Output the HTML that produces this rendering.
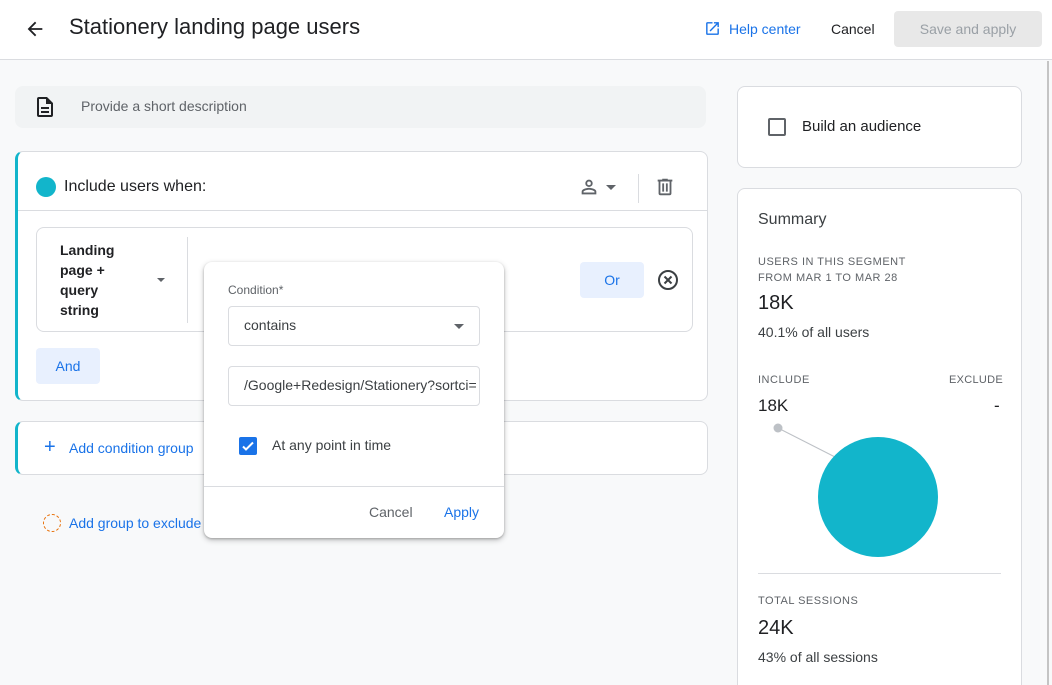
<!DOCTYPE html>
<html><head><meta charset="utf-8"><style>
*{box-sizing:border-box;margin:0;padding:0}
html,body{width:1052px;height:685px;overflow:hidden}
body{background:#f8f9fa;font-family:"Liberation Sans",Arial,sans-serif;color:#202124;position:relative}
.abs{position:absolute}
.card{position:absolute;background:#fff;border:1px solid #dadce0;border-radius:8px}
.blue{color:#1a73e8}
</style></head><body>
<div class="abs" style="left:0;top:0;width:1052px;height:60px;background:#fff;border-bottom:1px solid #dadce0"></div>
<svg class="abs" style="left:24px;top:18px" width="22" height="22" viewBox="0 0 24 24"><path d="M20 11H7.8l5.6-5.6L12 4l-8 8 8 8 1.4-1.4L7.8 13H20z" fill="#202124"/></svg>
<div class="abs" style="left:69px;top:14px;font-size:22px;color:#202124">Stationery landing page users</div>
<svg class="abs" style="left:704px;top:20px" width="17" height="17" viewBox="0 0 24 24"><path d="M19 19H5V5h7V3H5a2 2 0 0 0-2 2v14a2 2 0 0 0 2 2h14a2 2 0 0 0 2-2v-7h-2v7zM14 3v2h3.6l-9.8 9.8 1.4 1.4L19 6.4V10h2V3z" fill="#1a73e8"/></svg>
<div class="abs blue" style="left:729px;top:21px;font-size:14px">Help center</div>
<div class="abs" style="left:831px;top:21px;font-size:14px">Cancel</div>
<div class="abs" style="left:894px;top:11px;width:148px;height:36px;background:#e8e8e8;border-radius:4px;color:#9aa0a6;font-size:14px;text-align:center;line-height:36px">Save and apply</div>
<div class="abs" style="left:1047px;top:61px;width:2px;height:624px;background:#c4c4c4"></div>

<div class="abs" style="left:15px;top:86px;width:691px;height:42px;background:#f1f3f4;border-radius:8px"></div>
<svg class="abs" style="left:33px;top:95px" width="24" height="24" viewBox="0 0 24 24"><path d="M14 2H6a2 2 0 0 0-2 2v16a2 2 0 0 0 2 2h12a2 2 0 0 0 2-2V8zm4 18H6V4h7v5h5zM8 12h8v2H8zm0 4h8v2H8z" fill="#202124"/></svg>
<div class="abs" style="left:81px;top:98px;font-size:14px;color:#5f6368">Provide a short description</div>

<div class="card" style="left:15px;top:151px;width:693px;height:250px;border-left:3px solid #12b5cb"></div>
<div class="abs" style="left:36px;top:177px;width:20px;height:20px;border-radius:50%;background:#12b5cb"></div>
<div class="abs" style="left:64px;top:178px;font-size:16px">Include users when:</div>
<svg class="abs" style="left:578px;top:176px" width="22" height="22" viewBox="0 0 24 24"><path d="M12 6a2 2 0 1 1 0 4 2 2 0 0 1 0-4m0 9c2.7 0 5.8 1.3 6 2v1H6v-1c.2-.7 3.3-2 6-2m0-11a4 4 0 1 0 0 8 4 4 0 0 0 0-8zm0 9c-2.7 0-8 1.3-8 4v3h16v-3c0-2.7-5.3-4-8-4z" fill="#5f6368"/></svg>
<div class="abs" style="left:606px;top:185px;border-left:5px solid transparent;border-right:5px solid transparent;border-top:5px solid #5f6368"></div>
<div class="abs" style="left:638px;top:174px;width:1px;height:29px;background:#dadce0"></div>
<svg class="abs" style="left:654px;top:176px" width="22" height="22" viewBox="0 0 24 24"><path d="M15 4V3H9v1H4v2h1v13a2 2 0 0 0 2 2h10a2 2 0 0 0 2-2V6h1V4zm2 15H7V6h10zM9 8h2v9H9zm4 0h2v9h-2z" fill="#5f6368"/></svg>
<div class="abs" style="left:18px;top:210px;width:689px;height:1px;background:#dadce0"></div>
<div class="card" style="left:36px;top:227px;width:657px;height:105px"></div>
<div class="abs" style="left:60px;top:240px;font-size:14px;line-height:20px;font-weight:bold;color:#202124">Landing<br>page +<br>query<br>string</div>
<div class="abs" style="left:157px;top:278px;border-left:4px solid transparent;border-right:4px solid transparent;border-top:4px solid #5f6368"></div>
<div class="abs" style="left:187px;top:237px;width:1px;height:86px;background:#dadce0"></div>
<div class="abs" style="left:580px;top:262px;width:64px;height:36px;background:#e8f0fe;border-radius:4px;color:#1a73e8;font-size:14px;text-align:center;line-height:36px">Or</div>
<svg class="abs" style="left:656px;top:268px" width="24" height="24" viewBox="0 0 24 24"><circle cx="12" cy="12" r="9" fill="none" stroke="#3c4043" stroke-width="2"/><path d="M8.5 8.5l7 7M15.5 8.5l-7 7" stroke="#3c4043" stroke-width="2"/></svg>
<div class="abs" style="left:36px;top:348px;width:64px;height:36px;background:#e8f0fe;border-radius:4px;color:#1a73e8;font-size:14px;text-align:center;line-height:36px">And</div>

<div class="card" style="left:15px;top:421px;width:693px;height:54px;border-left:3px solid #12b5cb"></div>
<div class="abs blue" style="left:44px;top:436px;font-size:20px">+</div>
<div class="abs blue" style="left:69px;top:440px;font-size:14px">Add condition group</div>
<div class="abs" style="left:43px;top:514px;width:18px;height:18px;border-radius:50%;border:1.5px dashed #e8710a"></div>
<div class="abs blue" style="left:69px;top:515px;font-size:14px">Add group to exclude</div>

<div class="abs" style="left:204px;top:262px;width:300px;height:276px;background:#fff;border-radius:8px;box-shadow:0 2px 6px rgba(0,0,0,.25),0 1px 2px rgba(0,0,0,.2)"></div>
<div class="abs" style="left:228px;top:283px;font-size:12px;color:#5f6368">Condition*</div>
<div class="abs" style="left:228px;top:306px;width:252px;height:40px;border:1px solid #dadce0;border-radius:4px"></div>
<div class="abs" style="left:244px;top:317px;font-size:14px;color:#3c4043">contains</div>
<div class="abs" style="left:454px;top:324px;border-left:5px solid transparent;border-right:5px solid transparent;border-top:5px solid #5f6368"></div>
<div class="abs" style="left:228px;top:366px;width:252px;height:40px;border:1px solid #dadce0;border-radius:4px;overflow:hidden"><div style="position:absolute;left:15px;top:10px;font-size:14px;color:#3c4043;white-space:nowrap;width:232px;overflow:hidden">/Google+Redesign/Stationery?sortci=newest</div></div>
<div class="abs" style="left:239px;top:437px;width:18px;height:18px;background:#1a73e8;border-radius:2px"><svg width="18" height="18" viewBox="0 0 18 18"><path d="M4 9.5l3 3 7-7" stroke="#fff" stroke-width="2" fill="none"/></svg></div>
<div class="abs" style="left:272px;top:437px;font-size:14px;color:#3c4043">At any point in time</div>
<div class="abs" style="left:204px;top:486px;width:300px;height:1px;background:#dadce0"></div>
<div class="abs" style="left:369px;top:504px;font-size:14px;color:#5f6368">Cancel</div>
<div class="abs blue" style="left:444px;top:504px;font-size:14px">Apply</div>

<div class="card" style="left:737px;top:86px;width:285px;height:82px"></div>
<div class="abs" style="left:768px;top:118px;width:18px;height:18px;border:2px solid #5f6368;border-radius:2px"></div>
<div class="abs" style="left:802px;top:118px;font-size:15px">Build an audience</div>

<div class="card" style="left:737px;top:188px;width:285px;height:520px"></div>
<div class="abs" style="left:758px;top:211px;font-size:16px;color:#3c4043">Summary</div>
<div class="abs" style="left:758px;top:254px;font-size:11px;line-height:16px;letter-spacing:.5px;color:#5f6368">USERS IN THIS SEGMENT<br>FROM MAR 1 TO MAR 28</div>
<div class="abs" style="left:758px;top:292px;font-size:20px">18K</div>
<div class="abs" style="left:758px;top:324px;font-size:14px;color:#3c4043">40.1% of all users</div>
<div class="abs" style="left:758px;top:374px;font-size:11px;letter-spacing:.5px;color:#5f6368">INCLUDE</div>
<div class="abs" style="left:949px;top:374px;font-size:11px;letter-spacing:.3px;color:#5f6368">EXCLUDE</div>
<div class="abs" style="left:758px;top:396px;font-size:17px">18K</div>
<div class="abs" style="left:994px;top:396px;font-size:17px">-</div>
<svg class="abs" style="left:737px;top:400px" width="285" height="170"><line x1="41" y1="28" x2="100" y2="58" stroke="#bdc1c6"/><circle cx="41" cy="28" r="4.5" fill="#bdc1c6"/><circle cx="141" cy="97" r="60" fill="#12b5cb"/></svg>
<div class="abs" style="left:758px;top:573px;width:243px;height:1px;background:#dadce0"></div>
<div class="abs" style="left:758px;top:595px;font-size:11px;letter-spacing:.5px;color:#5f6368">TOTAL SESSIONS</div>
<div class="abs" style="left:758px;top:617px;font-size:20px">24K</div>
<div class="abs" style="left:758px;top:649px;font-size:14px;color:#3c4043">43% of all sessions</div>
</body></html>
